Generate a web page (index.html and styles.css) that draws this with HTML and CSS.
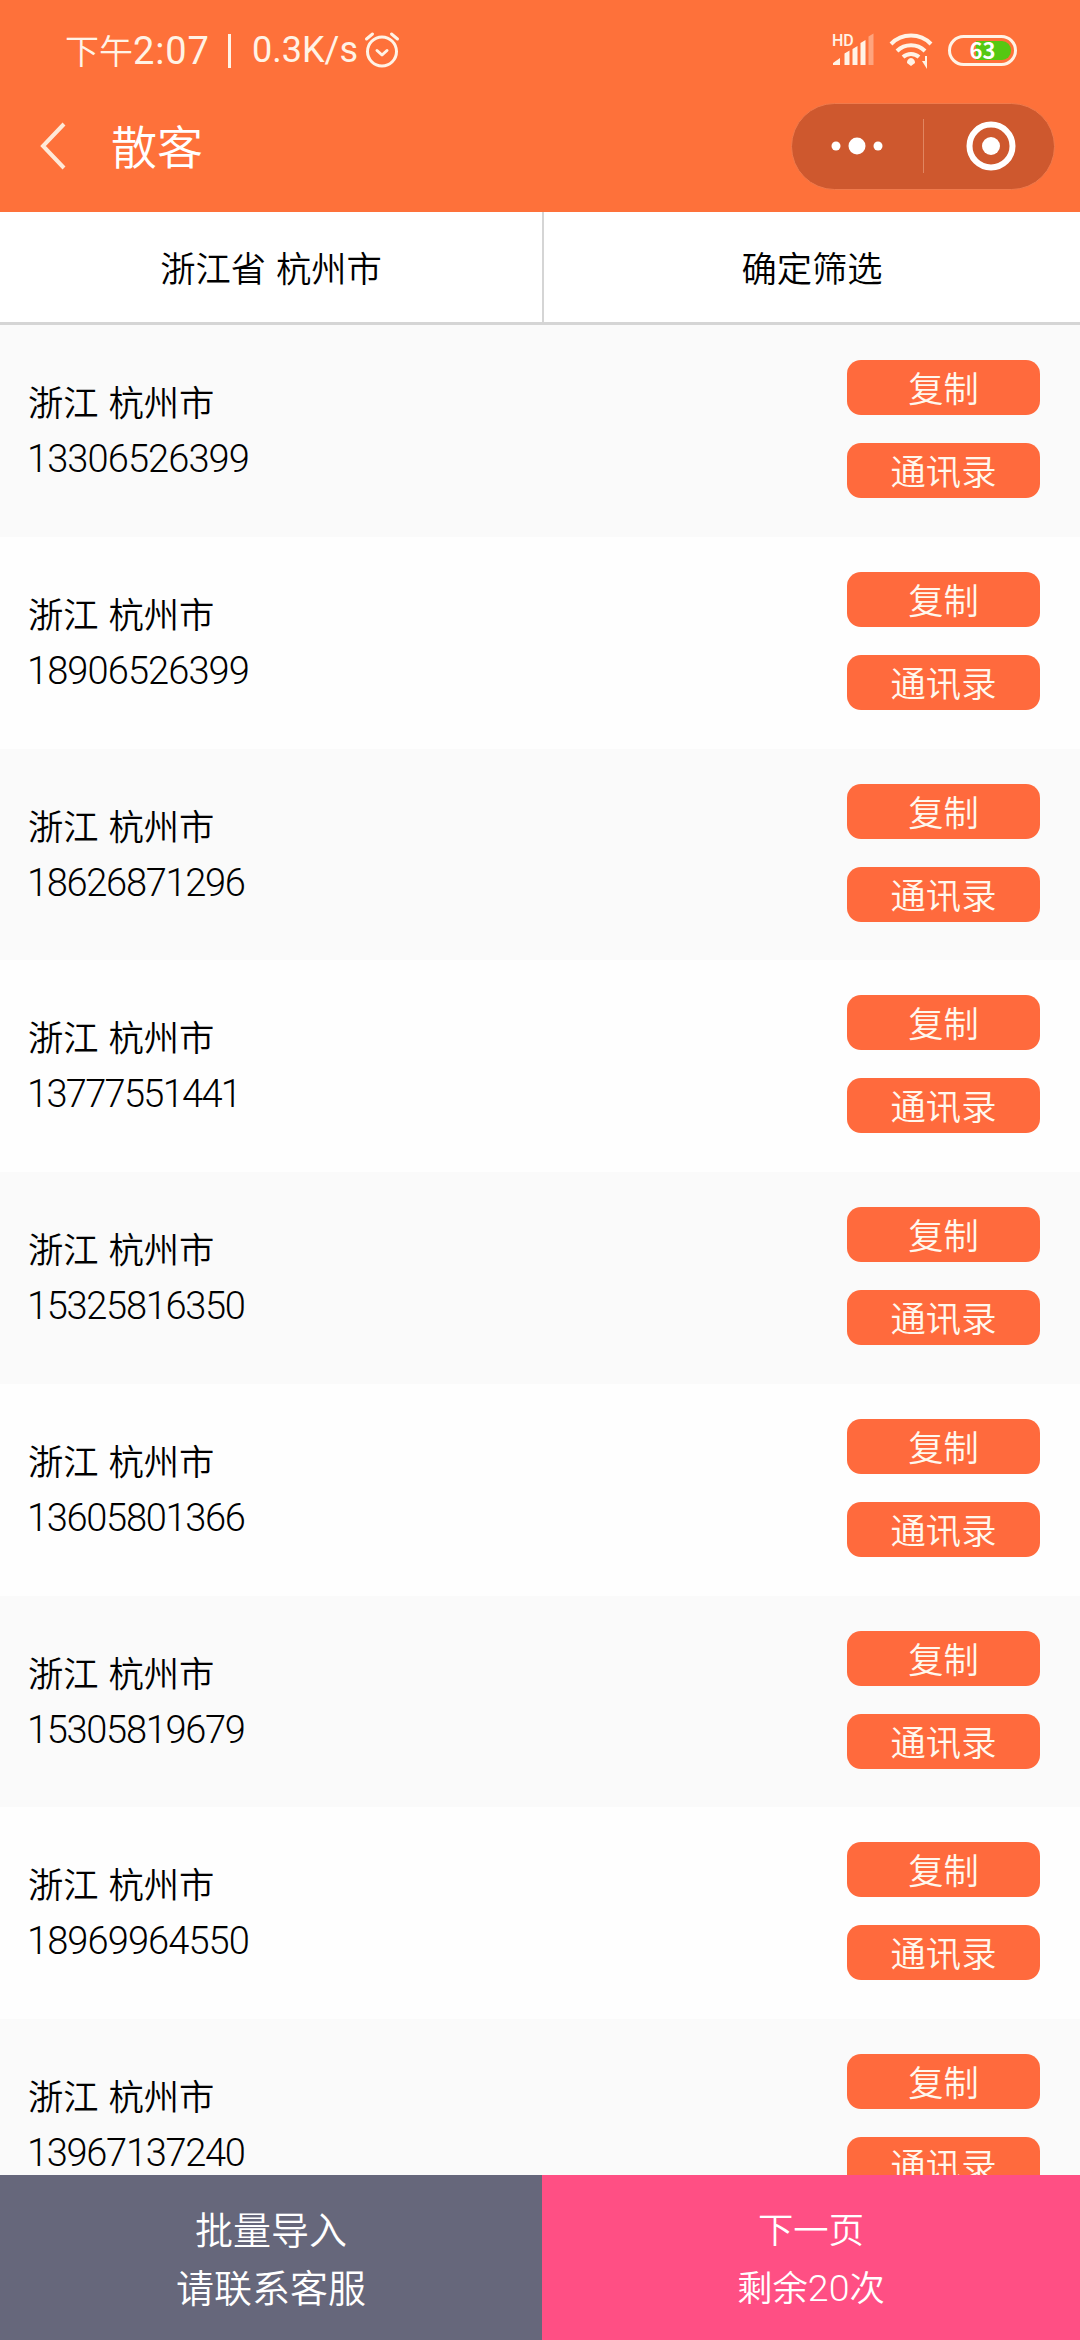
FILE: index.html
```html
<!DOCTYPE html>
<html lang="zh-CN">
<head>
<meta charset="utf-8">
<title>散客</title>
<link rel="stylesheet" href="styles.css">
</head>
<body>
<div class="app">
  <header class="header">
    <div class="status">
      <span class="clock">下午<span class="time">2:07</span></span><span class="divider"></span><span class="speed">0.3K/s</span>
      <svg class="alarm" viewBox="0 0 36 38" fill="none" stroke="currentColor" stroke-width="3" stroke-linecap="round" stroke-linejoin="round"><circle cx="18" cy="20.500" r="14.500"/><path d="M2.500 8 8.500 3M33.500 8 27.500 3M13 19.500l5 4.500 5-4.500"/></svg>
      <div class="indicators">
        <svg class="signal" viewBox="0 0 42 34" fill="currentColor"><text class="hd" x="0" y="13">HD</text><path d="M1 32v-2l7-5v7zM12.500 32V20.500l5-3V32zM20.500 32V16l5-3V32zM28.500 32V10l5-3V32z"/><path opacity=".4" d="M36.500 32V3.500l5-3V32z"/></svg>
        <svg class="wifi" viewBox="0 0 44 38" fill="none" stroke="currentColor" stroke-width="4"><path d="M2 12a28 28 0 0 1 40 0M8 19a20 20 0 0 1 28 0M14 25a12 12 0 0 1 16 0"/><path fill="currentColor" stroke="none" d="M22 26a5 5 0 0 1 4 5l-4 3-4-3a5 5 0 0 1 4-5zM33 29h3v-5h2v13z"/></svg>
        <div class="battery"><span class="battery-fill"></span><span class="battery-text">63</span></div>
      </div>
    </div>
    <div class="navbar">
      <svg class="back" viewBox="0 0 26 48" fill="none" stroke="currentColor" stroke-width="4"><path d="M24 2 3 24l21 22"/></svg>
      <h1 class="title">散客</h1>
      <div class="capsule">
        <svg class="more" viewBox="0 0 52 20" fill="currentColor"><circle cx="5" cy="10" r="4.500"/><circle cx="26" cy="10" r="8.500"/><circle cx="47" cy="10" r="4.500"/></svg>
        <span class="capsule-line"></span>
        <svg class="close" viewBox="0 0 50 50" fill="none" stroke="currentColor"><circle cx="25" cy="25" r="21.500" stroke-width="6"/><circle cx="25" cy="25" r="9" fill="currentColor" stroke="none"/></svg>
      </div>
    </div>
  </header>
  <div class="filters"><div class="filter region">浙江省 杭州市</div><div class="filter">确定筛选</div></div>
  <main class="list">
    <div class="row"><div class="info"><div>浙江 杭州市</div><div class="phone">13306526399</div></div><div class="actions"><div class="btn">复制</div><div class="btn">通讯录</div></div></div>
    <div class="row"><div class="info"><div>浙江 杭州市</div><div class="phone">18906526399</div></div><div class="actions"><div class="btn">复制</div><div class="btn">通讯录</div></div></div>
    <div class="row"><div class="info"><div>浙江 杭州市</div><div class="phone tight">18626871296</div></div><div class="actions"><div class="btn">复制</div><div class="btn">通讯录</div></div></div>
    <div class="row"><div class="info"><div>浙江 杭州市</div><div class="phone tighter">13777551441</div></div><div class="actions"><div class="btn">复制</div><div class="btn">通讯录</div></div></div>
    <div class="row"><div class="info"><div>浙江 杭州市</div><div class="phone tight">15325816350</div></div><div class="actions"><div class="btn">复制</div><div class="btn">通讯录</div></div></div>
    <div class="row"><div class="info"><div>浙江 杭州市</div><div class="phone tight">13605801366</div></div><div class="actions"><div class="btn">复制</div><div class="btn">通讯录</div></div></div>
    <div class="row"><div class="info"><div>浙江 杭州市</div><div class="phone tight">15305819679</div></div><div class="actions"><div class="btn">复制</div><div class="btn">通讯录</div></div></div>
    <div class="row"><div class="info"><div>浙江 杭州市</div><div class="phone">18969964550</div></div><div class="actions"><div class="btn">复制</div><div class="btn">通讯录</div></div></div>
    <div class="row"><div class="info"><div>浙江 杭州市</div><div class="phone tight">13967137240</div></div><div class="actions"><div class="btn">复制</div><div class="btn">通讯录</div></div></div>
  </main>
  <footer class="footer">
    <div class="import"><div>批量导入</div><div>请联系客服</div></div>
    <div class="next"><div>下一页</div><div>剩余<span class="count">20</span>次</div></div>
  </footer>
</div>
</body>
</html>
```
FILE: styles.css
```css
* { box-sizing: border-box; }
body { margin: 0; font-family: "Noto Sans CJK SC", sans-serif; font-weight: 350; color: #000; }
.app { width: 1080px; height: 2340px; display: flex; flex-direction: column; overflow: hidden; background: #fefefe; }
.header { height: 212px; flex: none; background: #fe713a; color: #fff3e6; }
.status { height: 100px; padding: 0 63px 0 65px; display: flex; align-items: center; font-size: 34px; line-height: 50px; }
.clock { width: 144px; white-space: nowrap; }
.time { font-family: Roboto, sans-serif; font-size: 38px; font-weight: 400; letter-spacing: 0.900px; }
.divider { width: 3px; height: 34px; margin: 2px 21px 0 19px; background: currentColor; }
.speed { width: 105px; white-space: nowrap; font-family: Roboto, "Noto Sans CJK SC", sans-serif; font-size: 36px; font-weight: 400; }
.alarm { width: 36px; height: 38px; margin-left: 7px; }
.indicators { margin-left: auto; display: flex; align-items: center; }
.signal { width: 42px; height: 34px; overflow: visible; }
.hd { font-family: Roboto, sans-serif; font-size: 16px; font-weight: 500; }
.wifi { width: 44px; height: 38px; margin: 2px 15px 0 15px; }
.battery { position: relative; width: 69px; height: 31px; border: 3px solid currentColor; border-radius: 16px; }
.battery-fill { position: absolute; right: 3px; top: 3px; width: 35px; height: 19px; background: #55c812; border-radius: 0 9px 9px 0; }
.battery-text { position: absolute; inset: 0; text-align: center; font: 700 22px/23px "Noto Sans CJK SC", sans-serif; color: #fff; }
.navbar { height: 92px; padding: 0 25px 0 40px; display: flex; align-items: center; color: #fff; }
.back { width: 26px; height: 48px; color: #ffe9d8; }
.title { margin: -5px 0 0 45px; font-size: 46px; line-height: 60px; font-weight: 350; }
.capsule { margin-left: auto; width: 264px; height: 87px; border-radius: 44px; border: 1px solid #f07a4c; background: #ce582e; display: flex; align-items: center; }
.more { width: 52px; height: 20px; margin-left: 39px; }
.capsule-line { width: 1px; height: 54px; margin-left: 40px; background: #e18661; }
.close { width: 50px; height: 50px; margin-left: 42px; }
.filters { height: 113px; flex: none; display: flex; border-bottom: 3px solid #d5d5d5; background: #fff; font-size: 35.300px; }
.filter { flex: 1; text-align: center; line-height: 109px; word-spacing: 2px; }
.region { flex: none; width: 544px; border-right: 2px solid #d5d5d5; }
.list { flex: 1; min-height: 0; overflow: hidden; font-size: 35.300px; word-spacing: 2px; }
.row { height: 211.750px; display: flex; justify-content: space-between; padding: 35px 40px 0 28px; }
.row:nth-child(odd) { background: #fafafa; }
.info { line-height: 56px; padding-top: 13px; }
.phone { font-family: Roboto, sans-serif; font-weight: 300; font-size: 38px; line-height: 60px; letter-spacing: -0.900px; margin-left: -1px; }
.tight { letter-spacing: -1.300px; }
.tighter { letter-spacing: -1.700px; }
.btn { width: 193px; height: 55px; margin-bottom: 28px; border-radius: 14px; background: #ff6a3d; color: #fff8ee; text-align: center; line-height: 53px; }
.footer { height: 165px; flex: none; display: flex; color: #fff; text-align: center; line-height: 58px; }
.import { width: 542px; padding-top: 24px; background: #66677b; font-size: 38px; }
.next { flex: 1; padding-top: 24px; background: #ff4f84; font-size: 35.300px; }
.count { font-family: Roboto, sans-serif; font-weight: 300; font-size: 37.500px; line-height: 1; }
```
